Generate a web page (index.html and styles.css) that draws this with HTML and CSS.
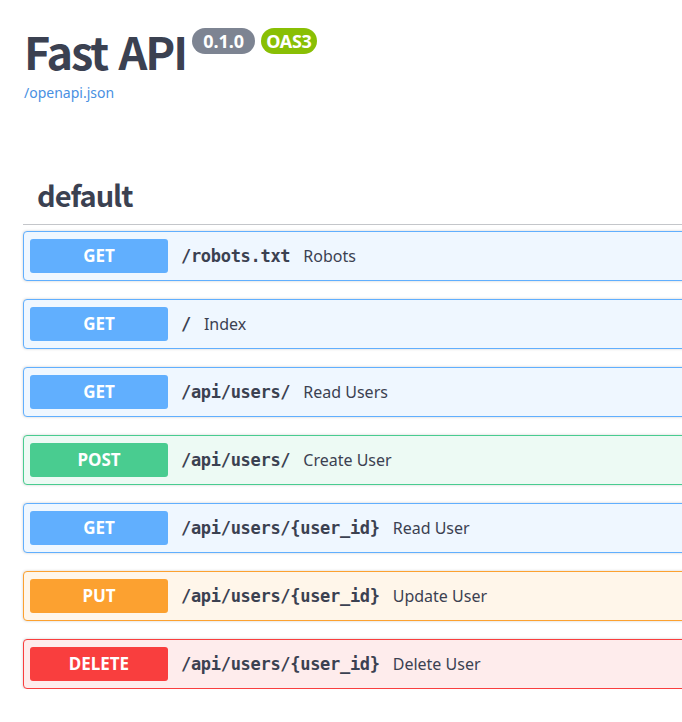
FILE: index.html
```html
<!DOCTYPE html>
<html>
<head>
<meta charset="utf-8">
<link rel="stylesheet" href="styles.css">
</head>
<body>
<div class="page">
  <header class="info">
    <div class="title-row">
      <h1 class="title">Fast API</h1>
      <span class="badge badge-version">0.1.0</span>
      <span class="badge badge-oas">OAS3</span>
    </div>
    <a class="spec-link" href="#">/openapi.json</a>
  </header>

  <section class="tag-section">
    <h3 class="tag-title">default</h3>
    <div class="ops">
      <div class="op op-get"><span class="method">GET</span><span class="path">/robots.txt</span><span class="summary">Robots</span></div>
      <div class="op op-get"><span class="method">GET</span><span class="path">/</span><span class="summary">Index</span></div>
      <div class="op op-get"><span class="method">GET</span><span class="path">/api/users/</span><span class="summary">Read Users</span></div>
      <div class="op op-post"><span class="method">POST</span><span class="path">/api/users/</span><span class="summary">Create User</span></div>
      <div class="op op-get"><span class="method">GET</span><span class="path">/api/users/{user_id}</span><span class="summary">Read User</span></div>
      <div class="op op-put"><span class="method">PUT</span><span class="path">/api/users/{user_id}</span><span class="summary">Update User</span></div>
      <div class="op op-delete"><span class="method">DELETE</span><span class="path">/api/users/{user_id}</span><span class="summary">Delete User</span></div>
    </div>
  </section>
</div>
</body>
</html>
```

FILE: styles.css
```css
html, body {
  margin: 0;
  padding: 0;
  overflow: hidden;
  background: #fff;
}
body {
  font-family: "Noto Sans", "Open Sans", sans-serif;
  color: #3b4151;
}
.page {
  padding: 0 0 0 23px;
  width: 800px;
}
.info {
  padding: 22px 0 0 1px;
}
.title-row {
  display: flex;
  align-items: flex-start;
  gap: 6px;
}
.title {
  margin: 0;
  font-family: "Noto Sans CJK KR", "Noto Sans", sans-serif;
  font-size: 45px;
  font-weight: 700;
  line-height: 58px;
  letter-spacing: -2px;
  word-spacing: 3px;
  color: #3b4151;
}
.badge {
  margin-top: 6px;
  height: 26px;
  line-height: 26px;
  border-radius: 13px;
  color: #fff;
  font-size: 18px;
  font-weight: 700;
}
.badge-version { background: #7d8492; padding: 0 11px; }
.badge-oas { background: #89bf04; padding: 0 5px; letter-spacing: -0.3px; }
.spec-link {
  display: block;
  margin-top: 3px;
  font-size: 14px;
  line-height: 20px;
  color: #4990e2;
  text-decoration: none;
}
.tag-section {
  margin-top: 71px;
}
.tag-title {
  margin: 0;
  padding: 0 0 10px 14px;
  font-family: "Noto Sans CJK KR", "Noto Sans", sans-serif;
  font-size: 29px;
  font-weight: 700;
  line-height: 40px;
  letter-spacing: -1px;
  border-bottom: 1px solid rgba(59,65,81,.3);
}
.ops {
  padding-top: 6px;
  display: flex;
  flex-direction: column;
  gap: 18px;
}
.op {
  display: flex;
  align-items: center;
  height: 50px;
  box-sizing: border-box;
  padding: 0 6px;
  border: 1px solid;
  border-radius: 4px;
  box-shadow: 0 0 3px rgba(0,0,0,.19);
}
.method {
  width: 138px;
  height: 34px;
  line-height: 34px;
  flex: none;
  border-radius: 3px;
  text-align: center;
  color: #fff;
  font-size: 17px;
  font-weight: 700;
}
.path {
  margin-left: 13px;
  font-family: "DejaVu Sans Mono", monospace;
  font-size: 17px;
  letter-spacing: -0.3px;
  font-weight: 700;
  color: #3b4151;
}
.summary {
  margin-left: 13px;
  font-size: 16px;
  color: #3b4151;
}
.op-get { border-color: #61affe; background: #eff7ff; }
.op-get .method { background: #61affe; }
.op-post { border-color: #49cc90; background: #edfaf4; }
.op-post .method { background: #49cc90; }
.op-put { border-color: #fca130; background: #fff6ea; }
.op-put .method { background: #fca130; }
.op-delete { border-color: #f93e3e; background: #feecec; }
.op-delete .method { background: #f93e3e; }
```
